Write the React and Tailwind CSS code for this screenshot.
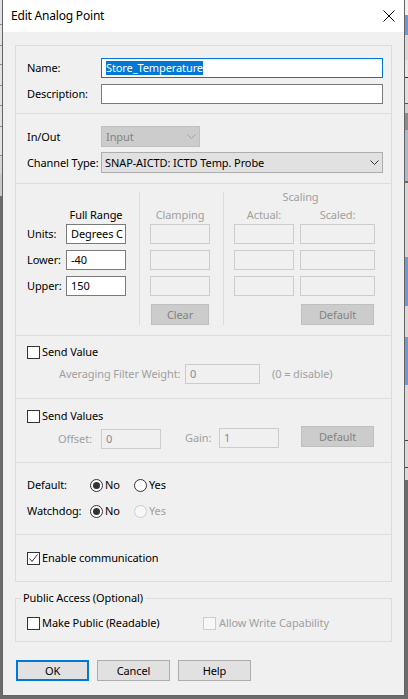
import React from "react";

// Windows-style dialog: Edit Analog Point

function Field({ className = "", disabled, children }) {
  return (
    <div
      className={`h-[20px] flex items-center pl-[4px] border overflow-hidden whitespace-nowrap ${
        disabled
          ? "border-[#cccccc] bg-[#f0f0f0] text-[#8a8a8a]"
          : "border-[#7a7a7a] bg-white text-black"
      } ${className}`}
    >
      {children}
    </div>
  );
}

function Check({ checked, disabled }) {
  return (
    <span
      className={`w-[13px] h-[13px] shrink-0 border flex items-center justify-center ${
        disabled ? "border-[#cccccc] bg-[#f7f7f7]" : "border-[#333333] bg-white"
      }`}
    >
      {checked && (
        <svg width="11" height="11" viewBox="0 0 11 11">
          <path d="M1.5 5.5 L4 8.5 L9.5 1.5" fill="none" stroke="#333333" strokeWidth="1" />
        </svg>
      )}
    </span>
  );
}

function Radio({ checked, disabled }) {
  return (
    <span
      className={`w-[13px] h-[13px] shrink-0 rounded-full border flex items-center justify-center ${
        disabled ? "border-[#cccccc] bg-[#f7f7f7]" : "border-[#333333] bg-white"
      }`}
    >
      {checked && <span className="w-[7px] h-[7px] rounded-full bg-[#333333]" />}
    </span>
  );
}

function Chevron({ color }) {
  return (
    <svg width="9" height="5" viewBox="0 0 9 5">
      <path d="M0.5 0.5 L4.5 4.5 L8.5 0.5" fill="none" stroke={color} strokeWidth="1" />
    </svg>
  );
}

function Button({ children, disabled, primary, className = "" }) {
  return (
    <div
      className={`h-[21px] flex items-center justify-center ${
        primary
          ? "border-2 border-[#0078d7] bg-[#e1e1e1] text-black"
          : disabled
          ? "border border-[#bfbfbf] bg-[#cccccc] text-[#838383]"
          : "border border-[#adadad] bg-[#e1e1e1] text-black"
      } ${className}`}
    >
      {children}
    </div>
  );
}

const leftStrip = [
  ["h-[24px]", "bg-[#e2e2e2]"],
  ["h-[1px]", "bg-[#8a8a8a]"],
  ["h-[20px]", "bg-[#e2e2e2]"],
  ["h-[1px]", "bg-[#8a8a8a]"],
  ["h-[18px]", "bg-[#e2e2e2]"],
  ["h-[1px]", "bg-[#8a8a8a]"],
  ["h-[20px]", "bg-[#e2e2e2]"],
  ["h-[1px]", "bg-[#8a8a8a]"],
  ["h-[19px]", "bg-[#e2e2e2]"],
  ["h-[1px]", "bg-[#8a8a8a]"],
  ["h-[20px]", "bg-[#e2e2e2]"],
  ["h-[1px]", "bg-[#8a8a8a]"],
  ["h-[28px]", "bg-[#e2e2e2]"],
  ["h-[1px]", "bg-[#8a8a8a]"],
  ["h-[18px]", "bg-[#d4d4d4]"],
  ["h-[22px]", "bg-[#c4c8cc]"],
];

const rightStrip = [
  ["h-[15px]", "bg-[#f0f0f0]"],
  ["h-[20px]", "bg-[#6a9bd8]"],
  ["h-[25px]", "bg-[#d9d9d9]"],
  ["h-[17px]", "bg-[#e6e6e6]"],
  ["h-[1px]", "bg-[#333333]"],
  ["h-[25px]", "bg-[#e0e0e0]"],
  ["h-[1px]", "bg-[#555555]"],
  ["h-[9px]", "bg-[#d0d0d0]"],
  ["h-[17px]", "bg-[#8c8c8c]"],
  ["h-[51px]", "bg-[#aab8c8]"],
  ["h-[2px]", "bg-[#666666]"],
  ["h-[74px]", "bg-[#d6d6d6]"],
  ["h-[49px]", "bg-[#6a9bd8]"],
  ["h-[31px]", "bg-[#d9d9d9]"],
  ["h-[48px]", "bg-[#6a9bd8]"],
  ["h-[55px]", "bg-[#d9d9d9]"],
  ["h-[1px]", "bg-[#444444]"],
  ["h-[26px]", "bg-[#d9d9d9]"],
  ["h-[1px]", "bg-[#444444]"],
  ["h-[12px]", "bg-[#d9d9d9]"],
];

export default function App() {
  return (
    <div className="w-[408px] h-[699px] overflow-hidden whitespace-nowrap bg-[#6b6b6b] font-['Noto_Sans',sans-serif] text-[11px] leading-[16px] tracking-[-0.1px] text-black">
      <div className="flex h-[696px]">
        {/* desktop behind, left */}
        <div className="w-[2px] flex flex-col">
          {leftStrip.map(([h, bg], i) => (
            <div key={i} className={`${h} ${bg}`} />
          ))}
        </div>

        {/* Dialog window */}
        <div className="w-[403px] h-[696px] border-x border-b border-[#646464] bg-[#f0f0f0] flex flex-col">
          {/* Title bar */}
          <div className="h-[32px] bg-white flex items-center justify-between pl-[8px] pr-[9px]">
            <span className="text-[12px] tracking-[-0.2px]">Edit Analog Point</span>
            <svg width="12" height="12" viewBox="0 0 12 12">
              <path d="M0.5 0.5 L11.5 11.5 M11.5 0.5 L0.5 11.5" stroke="#000" strokeWidth="1" />
            </svg>
          </div>

          {/* Main panel */}
          <div className="mt-[13px] ml-[12px] w-[377px] border border-[#dcdcdc] flex flex-col">
            {/* Name / Description */}
            <div className="h-[68px] border-b border-[#dcdcdc] pt-[12px] pl-[11px] flex flex-col gap-[6px]">
              <div className="flex items-center h-[20px]">
                <span className="w-[74px]">Name:</span>
                <div className="w-[282px] h-[20px] border border-[#0078d7] bg-white flex items-center pl-[4px]">
                  <span className="bg-[#0078d7] text-white leading-[14px]">Store_Temperature</span>
                </div>
              </div>
              <div className="flex items-center h-[20px]">
                <span className="w-[74px]">Description:</span>
                <Field className="w-[282px]" />
              </div>
            </div>

            {/* In/Out / Channel type */}
            <div className="h-[70px] border-b border-[#dcdcdc] pt-[12px] pl-[11px] flex flex-col gap-[5px]">
              <div className="flex items-center h-[21px]">
                <span className="w-[74px]">In/Out</span>
                <div className="w-[99px] h-[21px] border border-[#bfbfbf] bg-[#cccccc] text-[#838383] flex items-center justify-between pl-[4px] pr-[3px]">
                  <span>Input</span>
                  <Chevron color="#a0a0a0" />
                </div>
              </div>
              <div className="flex items-center h-[21px]">
                <span className="w-[74px]">Channel Type:</span>
                <div className="w-[282px] h-[21px] border border-[#adadad] bg-[#e1e1e1] flex items-center justify-between pl-[3px] pr-[3px]">
                  <span>SNAP-AICTD: ICTD Temp. Probe</span>
                  <Chevron color="#333333" />
                </div>
              </div>
            </div>

            {/* Range / Clamping / Scaling */}
            <div className="h-[152px] border-b border-[#dcdcdc] pl-[11px] flex">
              <div className="pt-[23px] flex flex-col">
                <div className="h-[16px] flex">
                  <span className="w-[39px]" />
                  <span className="w-[60px] text-center">Full Range</span>
                </div>
                <div className="mt-[1px] flex flex-col gap-[6px]">
                  {[
                    ["Units:", "Degrees C"],
                    ["Lower:", "-40"],
                    ["Upper:", "150"],
                  ].map(([label, value]) => (
                    <div key={label} className="flex items-center">
                      <span className="w-[39px]">{label}</span>
                      <Field className="w-[60px]">{value}</Field>
                    </div>
                  ))}
                </div>
              </div>

              <div className="ml-[13px] mt-[8px] w-px h-[133px] bg-[#dcdcdc]" />

              <div className="ml-[10px] w-[60px] pt-[23px] flex flex-col">
                <div className="h-[16px] text-center text-[#a0a0a0]">Clamping</div>
                <div className="mt-[1px] flex flex-col gap-[6px]">
                  <Field disabled />
                  <Field disabled />
                  <Field disabled />
                </div>
                <Button disabled className="mt-[8px] ml-[1px] w-[58px]">
                  Clear
                </Button>
              </div>

              <div className="ml-[13px] mt-[8px] w-px h-[133px] bg-[#dcdcdc]" />

              <div className="ml-[10px] pt-[5px] flex flex-col">
                <div className="h-[16px] text-center text-[#a0a0a0] pr-[8px]">Scaling</div>
                <div className="mt-[2px] flex">
                  <div className="w-[60px] flex flex-col">
                    <div className="h-[16px] text-center text-[#a0a0a0]">Actual:</div>
                    <div className="mt-[1px] flex flex-col gap-[6px]">
                      <Field disabled />
                      <Field disabled />
                      <Field disabled />
                    </div>
                  </div>
                  <div className="ml-[6px] w-[75px] flex flex-col">
                    <div className="h-[16px] text-center text-[#a0a0a0]">Scaled:</div>
                    <div className="mt-[1px] flex flex-col gap-[6px]">
                      <Field disabled />
                      <Field disabled />
                      <Field disabled />
                    </div>
                    <Button disabled className="mt-[8px] ml-[1px] w-[73px]">
                      Default
                    </Button>
                  </div>
                </div>
              </div>
            </div>

            {/* Send Value */}
            <div className="h-[63px] border-b border-[#dcdcdc] pt-[8px] pl-[11px] flex flex-col">
              <div className="h-[16px] flex items-center gap-[2px]">
                <Check />
                <span>Send Value</span>
              </div>
              <div className="mt-[4px] ml-[32px] flex items-center">
                <span className="w-[126px] text-[#a0a0a0]">Averaging Filter Weight:</span>
                <Field disabled className="w-[75px]">0</Field>
                <span className="ml-[12px] text-[#a0a0a0]">(0 = disable)</span>
              </div>
            </div>

            {/* Send Values */}
            <div className="h-[64px] border-b border-[#dcdcdc] pt-[9px] pl-[11px] flex flex-col">
              <div className="h-[16px] flex items-center gap-[2px]">
                <Check />
                <span>Send Values</span>
              </div>
              <div className="mt-[2px] ml-[31px] flex items-start">
                <div className="mt-[3px] flex items-center">
                  <span className="w-[43px] text-[#a0a0a0]">Offset:</span>
                  <Field disabled className="w-[60px]">0</Field>
                </div>
                <div className="mt-[2px] ml-[24px] flex items-center">
                  <span className="w-[34px] text-[#a0a0a0]">Gain:</span>
                  <Field disabled className="w-[60px]">1</Field>
                </div>
                <Button disabled className="ml-[22px] w-[73px]">
                  Default
                </Button>
              </div>
            </div>

            {/* Default / Watchdog */}
            <div className="h-[72px] border-b border-[#dcdcdc] pt-[14px] pl-[11px] flex flex-col gap-[10px]">
              <div className="h-[16px] flex items-center">
                <span className="w-[63px]">Default:</span>
                <div className="w-[44px] flex items-center gap-[2px]">
                  <Radio checked />
                  <span>No</span>
                </div>
                <div className="flex items-center gap-[2px]">
                  <Radio />
                  <span>Yes</span>
                </div>
              </div>
              <div className="h-[16px] flex items-center">
                <span className="w-[63px]">Watchdog:</span>
                <div className="w-[44px] flex items-center gap-[2px]">
                  <Radio checked />
                  <span>No</span>
                </div>
                <div className="flex items-center gap-[2px]">
                  <Radio disabled />
                  <span className="text-[#a0a0a0]">Yes</span>
                </div>
              </div>
            </div>

            {/* Enable communication */}
            <div className="h-[46px] pt-[15px] pl-[11px]">
              <div className="h-[16px] flex items-center gap-[2px]">
                <Check checked />
                <span>Enable communication</span>
              </div>
            </div>
          </div>

          {/* Public access group */}
          <fieldset className="mt-[8px] ml-[12px] w-[377px] border border-[#dcdcdc] pl-[11px] pt-[9px] pb-[10px]">
            <legend className="ml-[-6px] px-[2px] h-[16px]">Public Access (Optional)</legend>
            <div className="h-[16px] flex items-center">
              <div className="w-[176px] flex items-center gap-[2px]">
                <Check />
                <span>Make Public (Readable)</span>
              </div>
              <div className="flex items-center gap-[3px]">
                <Check disabled />
                <span className="text-[#a0a0a0]">Allow Write Capability</span>
              </div>
            </div>
          </fieldset>

          {/* Buttons */}
          <div className="mt-[18px] ml-[13px] flex gap-[8px]">
            <Button primary className="w-[73px]">OK</Button>
            <Button className="w-[73px]">Cancel</Button>
            <Button className="w-[73px]">Help</Button>
          </div>
        </div>

        {/* desktop behind, right */}
        <div className="w-[3px] flex flex-col">
          {rightStrip.map(([h, bg], i) => (
            <div key={i} className={`${h} ${bg}`} />
          ))}
        </div>
      </div>
    </div>
  );
}
